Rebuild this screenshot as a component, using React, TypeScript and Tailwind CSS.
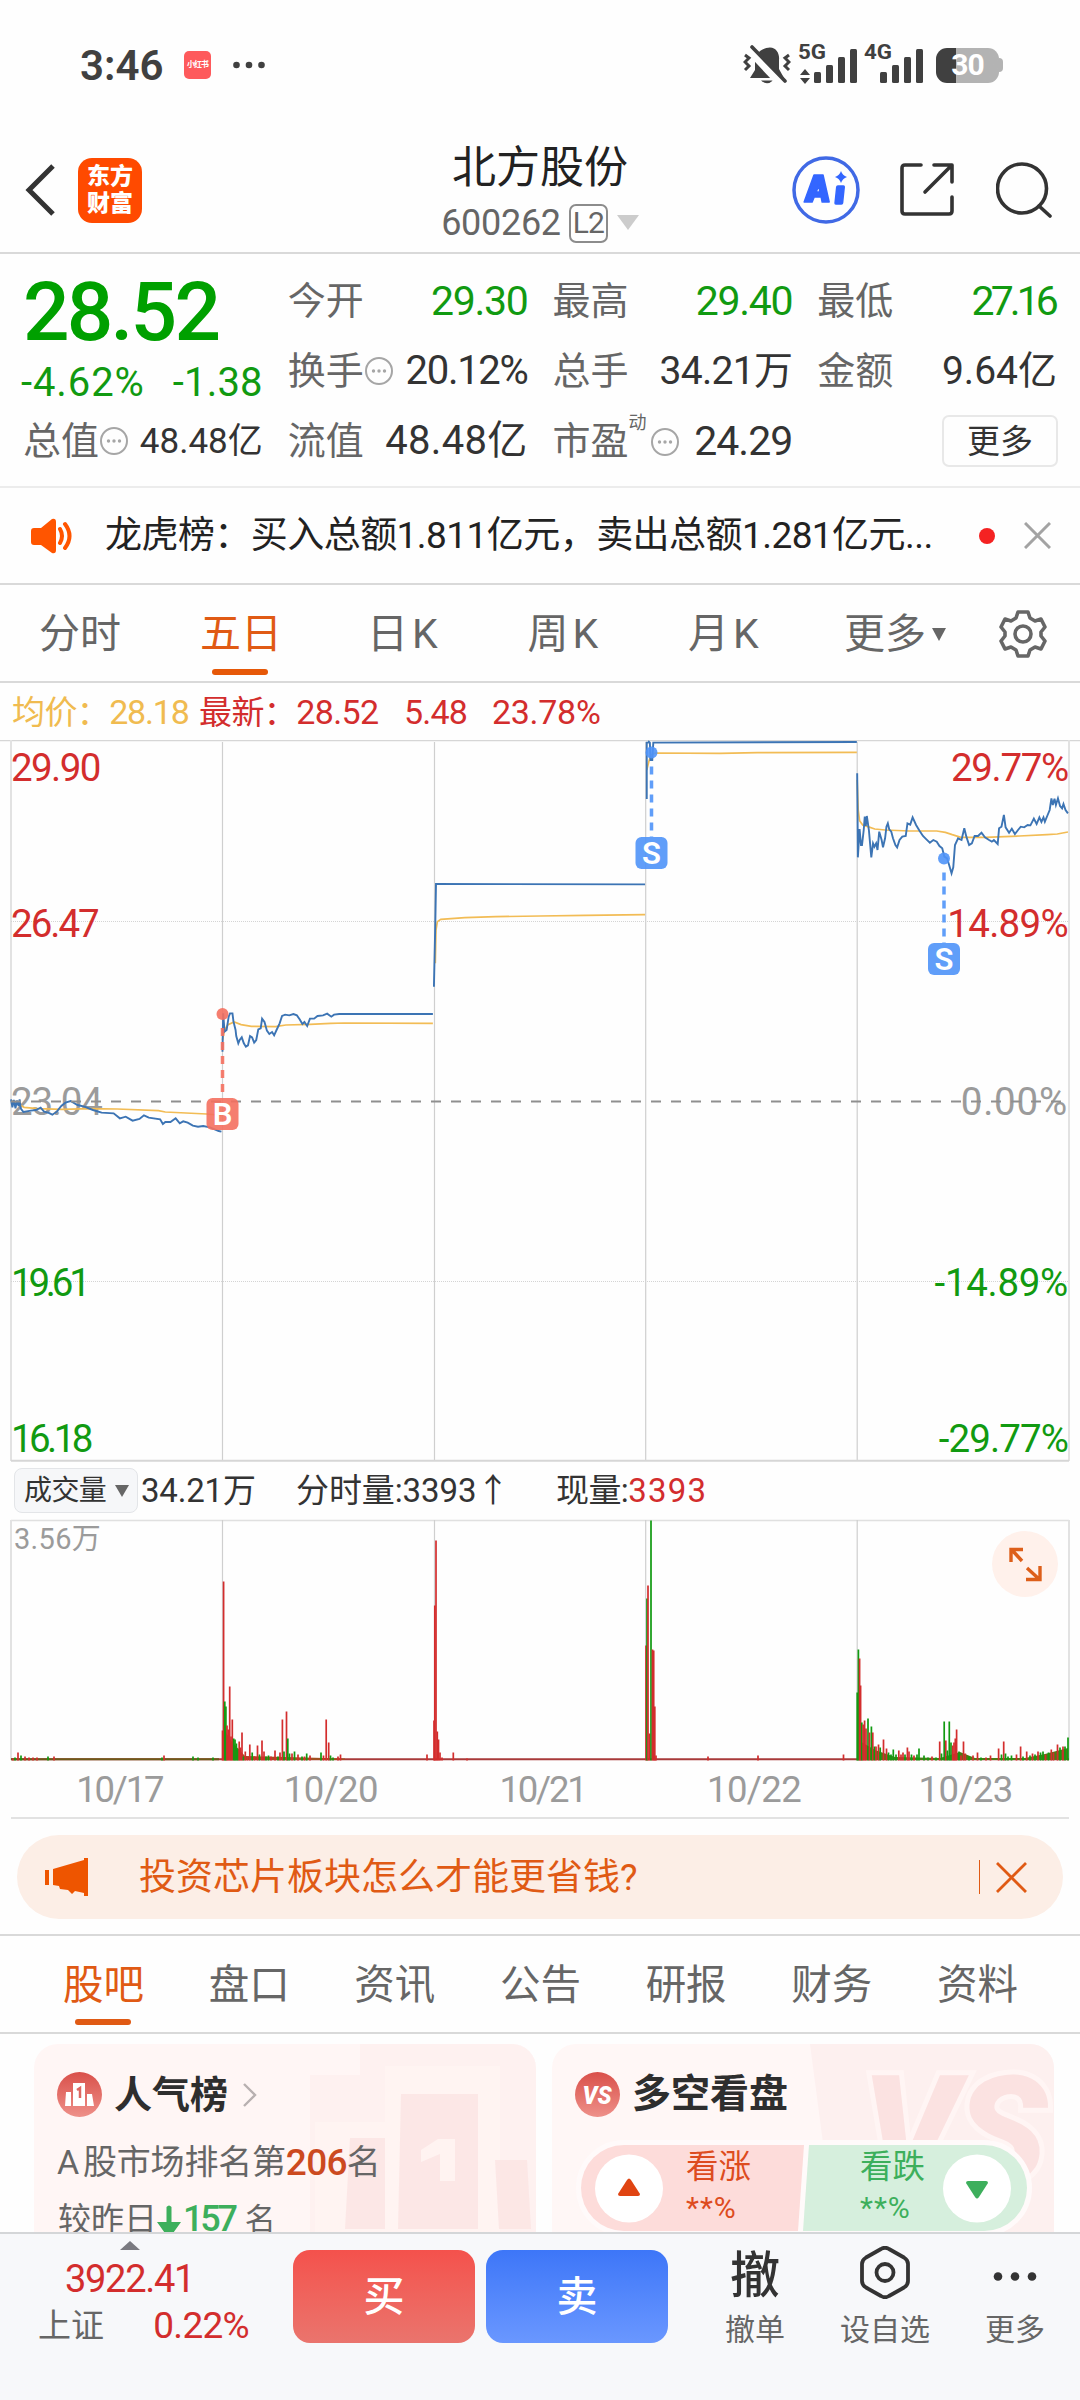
import React from 'react';

type Bar = [number, number, 'r' | 'g'];

const UP = '#d32d2d';
const DOWN = '#119a11';

// price lines, one per trading day
const priceLines = [
  '32,1108 36,1132 40,1110 45,1135 49,1112 54,1128 57,1108 60,1135 68,1146 90,1142 104,1140 118,1133 128,1145 140,1148 152,1154 165,1145 178,1128 190,1118 205,1113 225,1125 245,1130 270,1140 295,1148 330,1150 348,1165 365,1160 385,1172 405,1167 418,1156 432,1163 465,1168 473,1182 480,1176 495,1176 510,1165 522,1180 532,1174 545,1178 560,1187 575,1190 590,1188 610,1192 635,1203 643,1205',
  '646,965 648,850 652,905 658,900 664,860 668,850 675,850 678,875 684,900 686,918 692,940 696,930 702,922 708,940 714,950 720,946 726,918 732,922 738,938 744,930 750,898 757,895 761,866 768,876 775,902 782,912 790,906 796,916 803,900 812,880 819,858 828,854 840,856 852,852 862,856 870,868 878,882 884,876 892,888 900,866 912,866 922,858 938,856 950,851 962,860 970,854 985,852 1257,852',
  '1260,770 1264,580 1266,462 1873,463',
  '1878,207 1878,38 1882,38 1884,35 1887,38 1889,90 1894,90 1897,38 2488,36',
  '2489,130 2490,240 2491,382 2496,297 2500,345 2503,345 2508,300 2511,260 2514,288 2517,258 2523,300 2530,382 2535,340 2539,350 2544,340 2548,360 2553,305 2560,330 2564,352 2570,325 2574,290 2578,280 2582,298 2588,305 2593,325 2600,345 2605,352 2612,330 2620,320 2630,318 2635,280 2643,284 2650,262 2660,285 2670,302 2680,318 2690,328 2700,338 2710,330 2720,335 2728,348 2736,355 2742,380 2750,385 2756,405 2763,430 2768,412 2773,345 2782,325 2792,330 2800,295 2806,320 2814,345 2822,340 2830,318 2840,318 2850,308 2860,322 2872,330 2880,335 2886,330 2897,342 2901,295 2908,290 2915,255 2920,292 2930,308 2938,296 2947,312 2956,300 2964,290 2974,292 2984,285 2992,286 3002,266 3010,282 3018,262 3024,276 3030,262 3034,275 3042,255 3048,240 3053,205 3057,225 3062,206 3066,225 3072,205 3078,228 3084,235 3088,222 3094,240 3101,250',
];

const avgLines = [
  '32,1112 50,1120 70,1132 110,1136 180,1138 260,1136 340,1137 460,1142 480,1146 600,1152 643,1156',
  '646,930 652,900 662,884 680,876 700,884 730,889 800,890 830,885 900,883 960,880 1000,879 1257,880',
  '1264,700 1266,600 1270,575 1280,568 1350,563 1440,560 1568,558 1700,556 1873,554',
  '1878,120 1884,95 1890,75 1902,69 2090,70 2200,68 2488,67',
  '2489,150 2492,240 2496,272 2505,285 2520,290 2540,297 2570,300 2640,303 2720,303 2745,307 2765,314 2790,322 2860,322 2960,318 3040,314 3070,312 3101,306',
];

const spikes: Bar[] = [
  // 10/17
  [13, 2, 'r'], [15, 3, 'g'], [18, 8, 'r'], [21, 5, 'g'], [25, 4, 'r'], [29, 3, 'r'], [33, 3, 'r'], [37, 3, 'r'], [48, 4, 'g'], [54, 4, 'r'],
  [162, 3, 'g'], [164, 5, 'r'], [193, 4, 'g'], [198, 3, 'g'], [213, 3, 'g'],
  // 10/20
  [222.5, 30, 'r'], [223.6, 179, 'r'], [224.8, 59, 'g'], [225.9, 54, 'g'], [227, 35, 'r'], [228.3, 31, 'r'], [229.7, 74, 'r'], [231, 24, 'r'],
  [232.3, 41, 'r'], [233.7, 22, 'g'], [235, 21, 'g'], [236.4, 17, 'g'], [237.8, 12, 'g'], [239.2, 19, 'r'], [240.5, 13, 'r'], [242, 28, 'r'],
  [243.5, 4, 'g'], [245.3, 9, 'r'], [247.5, 4, 'r'], [249.8, 16, 'r'], [252.2, 8, 'g'], [254.5, 4, 'r'], [257.5, 15, 'r'], [259.5, 6, 'g'],
  [262, 20, 'r'], [264, 9, 'r'], [266, 4, 'g'], [268.5, 5, 'g'], [271, 4, 'r'], [275, 10, 'r'], [278, 4, 'g'], [280, 8, 'r'], [282.4, 41, 'r'],
  [284, 9, 'g'], [286.5, 49, 'r'], [287.8, 22, 'g'], [289.5, 7, 'g'], [292, 7, 'r'], [294.5, 9, 'g'], [298, 6, 'r'], [302, 4, 'g'],
  [304.5, 4, 'r'], [306.7, 7, 'g'], [310, 5, 'r'], [321, 8, 'g'], [323.5, 5, 'r'], [326.2, 41, 'r'], [328.7, 18, 'r'], [330.5, 5, 'g'],
  [333, 3, 'g'], [338, 4, 'r'], [340.5, 6, 'r'], [427, 6, 'r'],
  // 10/21
  [434, 40, 'r'], [434.8, 155, 'r'], [436, 220, 'r'], [437.3, 29, 'r'], [438.5, 21, 'r'], [440, 8, 'r'], [442, 3, 'r'], [453.3, 8, 'r'], [467, 2, 'r'],
  // 10/22
  [646, 115, 'r'], [647, 162, 'g'], [648, 175, 'r'], [649.5, 27, 'r'], [651, 240, 'g'], [652.5, 111, 'r'], [653.7, 110, 'r'], [654.8, 54, 'r'],
  [656, 5, 'r'], [708, 4, 'r'], [758, 5, 'r'], [843.5, 6, 'r'],
  // 10/23
  [857.2, 68, 'g'], [858.4, 111, 'g'], [859.6, 102, 'r'], [860.6, 75, 'r'], [861.8, 38, 'g'], [863.1, 36, 'r'], [864.6, 40, 'r'], [866, 32, 'r'],
  [868, 42, 'g'], [869.5, 28, 'r'], [871.4, 34, 'g'], [872.8, 28, 'r'], [874.5, 14, 'g'], [876, 14, 'r'], [878.5, 16, 'r'], [880.2, 13, 'g'],
  [883.5, 21, 'r'], [886.5, 12, 'r'], [888.5, 8, 'g'], [891, 6, 'g'], [893.3, 11, 'g'], [896, 6, 'g'], [898.8, 10, 'r'], [901, 6, 'r'],
  [903, 8, 'r'], [905, 6, 'g'], [907.4, 13, 'r'], [909, 9, 'r'], [911.5, 6, 'g'], [914, 5, 'r'], [917, 6, 'g'], [919, 12, 'g'],
  [924, 5, 'g'], [928, 3, 'g'], [932, 4, 'r'], [936, 3, 'g'], [939.7, 19, 'r'], [941.5, 7, 'g'], [944.2, 39, 'g'], [945.8, 20, 'r'],
  [947.4, 10, 'g'], [949.3, 39, 'g'], [951, 18, 'g'], [952.7, 15, 'r'], [954, 18, 'r'], [955.3, 22, 'r'], [956.6, 31, 'r'], [959, 9, 'g'],
  [961, 5, 'r'], [963.5, 19, 'r'], [965.3, 7, 'r'], [969, 4, 'g'], [973, 5, 'r'], [977.5, 8, 'r'], [981, 3, 'g'], [986, 3, 'r'], [990.5, 5, 'r'],
  [998.6, 12, 'r'], [1001.5, 6, 'g'], [1003.7, 19, 'r'], [1005.5, 7, 'g'], [1008, 4, 'g'], [1011.5, 5, 'g'], [1016.5, 6, 'r'],
  [1020.6, 14, 'r'], [1023, 4, 'g'], [1026.7, 9, 'r'], [1030, 5, 'g'], [1032.5, 7, 'r'], [1035, 6, 'g'], [1038, 9, 'r'], [1040.5, 8, 'g'],
  [1043, 9, 'g'], [1045.5, 6, 'r'], [1048.5, 8, 'g'], [1051.3, 11, 'r'], [1053.5, 8, 'r'], [1057.5, 16, 'r'], [1060, 13, 'g'],
  [1063, 14, 'r'], [1065, 14, 'g'], [1068, 23, 'g'],
];

const chartTabs = ['日K', '周K', '月K'];
const infoTabs = ['股吧', '盘口', '资讯', '公告', '研报', '财务', '资料'];
const dates = ['10/17', '10/20', '10/21', '10/22', '10/23'];

const Dots = () => (
  <svg width="28" height="28" viewBox="0 0 28 28" className="ml-px shrink-0">
    <circle cx="14" cy="14" r="13" fill="none" stroke="#a6a6a6" strokeWidth="2" />
    <circle cx="8.5" cy="14" r="1.7" fill="#a6a6a6" />
    <circle cx="14" cy="14" r="1.7" fill="#a6a6a6" />
    <circle cx="19.5" cy="14" r="1.7" fill="#a6a6a6" />
  </svg>
);

const Signal = ({ label, arrows }: { label: string; arrows?: boolean }) => (
  <svg width="60" height="50" viewBox="0 -8 60 50" className="-mt-[8px]" fill="#404040">
    <text x="0" y="15" fontSize="20" fontWeight="700" textLength="28" lengthAdjust="spacingAndGlyphs">{label}</text>
    {arrows && <path d="M2 31 L7 25 L12 31 Z M2 34 H12 L7 40 Z" />}
    <rect x="16" y="28" width="7" height="11" rx="1.5" />
    <rect x="28" y="21" width="7" height="18" rx="1.5" />
    <rect x="40" y="13" width="7" height="26" rx="1.5" />
    <rect x="52" y="5" width="7" height="34" rx="1.5" />
  </svg>
);

const StatusBar = () => (
  <div className="flex h-[130px] items-center pl-[80px] pr-[77px] text-[#404040]">
    <span className="w-[82px] whitespace-nowrap pt-[2px] text-[42px] font-semibold leading-none">3:46</span>
    <div className="ml-[22px] flex h-[28px] w-[27px] items-center justify-center rounded-[5px] bg-[#fe5a5c]">
      <span className="whitespace-nowrap text-[8px] font-bold leading-none tracking-[-1px] text-white">小红书</span>
    </div>
    <svg width="34" height="10" viewBox="0 0 34 10" className="ml-[21px]" fill="#404040">
      <circle cx="4.5" cy="5" r="3.3" />
      <circle cx="17" cy="5" r="3.3" />
      <circle cx="29.5" cy="5" r="3.3" />
    </svg>
    <svg width="48" height="42" viewBox="0 0 48 42" className="ml-auto">
      <path d="M17 7 C31 -2 37 8 36 16 V25 L41 34 H7 L12 26 V13 Z" fill="#404040" />
      <path d="M18 36.5 H30 Q24 42 18 36.5 Z" fill="#404040" />
      <path d="M6 5 L37 38" stroke="#fefefe" strokeWidth="9" />
      <path d="M9 3 L42 37" stroke="#404040" strokeWidth="3.6" strokeLinecap="round" />
      <path d="M2 11 L6 14 L2 18 L6 22 L2 26" fill="none" stroke="#404040" strokeWidth="3" />
      <path d="M46 11 L42 14 L46 18 L42 22 L46 26" fill="none" stroke="#404040" strokeWidth="3" />
    </svg>
    <div className="ml-[7px] flex gap-[6px]">
      <Signal label="5G" arrows />
      <Signal label="4G" />
    </div>
    <div className="ml-[12px] flex items-center">
      <div className="flex h-[35px] w-[63px] items-center justify-center rounded-[11px] bg-linear-to-r from-[#404040] from-[31%] to-[#b3b3b3] to-[31%]">
        <span className="text-[30px] font-bold leading-none tracking-[-1px] text-white">30</span>
      </div>
      <div className="h-[14px] w-[4px] rounded-r-full bg-[#b3b3b3]" />
    </div>
  </div>
);

const Header = () => (
  <div className="grid h-[124px] grid-cols-3 border-b-2 border-[#d9d9d9]">
    <div className="flex items-center pb-0.5 pl-[24px]">
      <svg width="32" height="54" viewBox="0 0 32 54" fill="none" stroke="#333" strokeWidth="5">
        <path d="M29 3 L5 27 L29 51" />
      </svg>
      <div className="ml-[22px] flex h-[65px] w-[64px] flex-col items-center justify-center rounded-[14px] bg-[#ff4a00] text-[23px] font-black leading-[27px] text-white">
        <span>东方</span>
        <span>财富</span>
      </div>
    </div>
    <div className="flex flex-col items-center pt-[11px]">
      <h1 className="text-[44px] leading-[54px] text-[#222]">北方股份</h1>
      <div className="flex h-[56px] items-center text-[#666]">
        <span className="text-[36px] leading-none tracking-[-0.3px]">600262</span>
        <span className="ml-[8px] flex h-[39px] w-[39px] items-center justify-center rounded-[7px] border-2 border-[#8c8c8c] text-[30px] leading-none tracking-[-1px]">L2</span>
        <svg width="22" height="16" viewBox="0 0 22 16" className="ml-[9px]">
          <path d="M0 0 H22 L11 15 Z" fill="#ccc" />
        </svg>
      </div>
    </div>
    <div className="flex items-center justify-end pb-[2px] pr-[28px]">
      <svg width="68" height="68" viewBox="0 0 68 68">
        <circle cx="34" cy="34" r="32" fill="none" stroke="#4069e5" strokeWidth="3.5" />
        <g transform="skewX(-6)" fill="#3366ff" stroke="#3366ff" strokeWidth="1.5" strokeLinejoin="round">
          <path fillRule="evenodd" d="M24 19 H33 L42 46 H35 L33.500 41 H26.500 L25 46 H17 Z M28 36 H31.500 L30 29 Z" />
          <rect x="48" y="30" width="7.500" height="18" rx="1" />
        </g>
        <path d="M49 15 Q50.500 19.500 55 21 Q50.500 22.500 49 27 Q47.500 22.500 43 21 Q47.500 19.500 49 15 Z" fill="#3366ff" />
      </svg>
      <svg width="54" height="56" viewBox="0 0 54 56" className="ml-[40px]" fill="none" stroke="#333" strokeWidth="3.6" strokeLinecap="round" strokeLinejoin="round">
        <path d="M21 3 H5 Q2 3 2 6 V49 Q2 52 5 52 H49 Q52 52 52 49 V35" />
        <path d="M34 3 H52 V20 M51 4 L25 30" />
      </svg>
      <svg width="56" height="56" viewBox="0 0 56 56" className="ml-[42px]" fill="none" stroke="#333" strokeWidth="3.6" strokeLinecap="round">
        <circle cx="26" cy="26.500" r="24.500" />
        <path d="M43 44 L54 54" />
      </svg>
    </div>
  </div>
);

const Quotes = () => (
  <div className="flex h-[234px] gap-[25px] border-b-2 border-[#ececec] px-[23px] pt-[12px] text-[38px] leading-none text-[#666]">
    <div className="w-[240px]">
      <div className="flex h-[92px] items-center text-[82px] font-medium tracking-[-2.8px] text-[#00a000]">28.52</div>
      <div className="-ml-[2px] flex h-[50px] items-center justify-between text-[40px] text-[#119a11]">
        <span className="tracking-[0.9px]">-4.62%</span>
        <span className="tracking-[0.2px]">-1.38</span>
      </div>
      <div className="flex h-[66px] items-center">
        <span>总值</span>
        <Dots />
        <span className="ml-auto whitespace-nowrap text-[35px] text-[#333]">48.48亿</span>
      </div>
    </div>
    <div className="w-[240px]">
      <div className="flex h-[70px] items-center justify-between">
        <span>今开</span>
        <span className="text-[41px] tracking-[-1.3px] text-[#119a11]">29.30</span>
      </div>
      <div className="flex h-[70px] items-center">
        <span>换手</span>
        <Dots />
        <span className="ml-auto text-[40px] tracking-[-1.3px] text-[#333]">20.12%</span>
      </div>
      <div className="flex h-[70px] items-center justify-between">
        <span>流值</span>
        <span className="text-[40px] tracking-[0.3px] text-[#333]">48.48亿</span>
      </div>
    </div>
    <div className="w-[240px]">
      <div className="flex h-[70px] items-center justify-between">
        <span>最高</span>
        <span className="text-[41px] tracking-[-1.3px] text-[#119a11]">29.40</span>
      </div>
      <div className="flex h-[70px] items-center justify-between">
        <span>总手</span>
        <span className="text-[39px] tracking-[-0.7px] text-[#333]">34.21万</span>
      </div>
      <div className="flex h-[70px] items-center">
        <span>市盈</span>
        <span className="mb-[36px] text-[18px]">动</span>
        <span className="-mb-px ml-[3px] flex"><Dots /></span>
        <span className="ml-auto text-[41px] tracking-[-1px] text-[#333]">24.29</span>
      </div>
    </div>
    <div className="w-[240px]">
      <div className="flex h-[70px] items-center justify-between">
        <span>最低</span>
        <span className="mr-[2px] text-[41px] tracking-[-3.9px] text-[#119a11]">27.16</span>
      </div>
      <div className="flex h-[70px] items-center justify-between">
        <span>金额</span>
        <span className="text-[39px] text-[#333]">9.64亿</span>
      </div>
      <div className="flex h-[70px] items-center justify-end">
        <span className="-mr-px flex h-[52px] w-[116px] items-center justify-center rounded-[7px] border-2 border-[#e8e8e8] text-[33px] text-[#333]">更多</span>
      </div>
    </div>
  </div>
);

const Notice = () => (
  <div className="flex h-[97px] items-center border-b-2 border-[#d9d9d9] pl-[31px] pr-[29px]">
    <svg width="43" height="36" viewBox="0 0 43 36">
      <path d="M3 10 H10 L21 1 Q25 0 25 4 V32 Q25 36 21 35 L10 27 H3 Q0 27 0 24 V13 Q0 10 3 10 Z" fill="#ff5500" />
      <path d="M29 11 Q33 18 29 25 M34 6 Q43 18 34 30" fill="none" stroke="#ff5500" strokeWidth="4" strokeLinecap="round" />
    </svg>
    <span className="ml-[31px] whitespace-nowrap text-[37px] leading-none tracking-[-0.55px] text-[#222]">龙虎榜：买入总额1.811亿元，卖出总额1.281亿元...</span>
    <span className="ml-auto h-[16px] w-[16px] rounded-full bg-[#f42222]" />
    <svg width="27" height="27" viewBox="0 0 27 27" className="ml-[29px]" stroke="#a3a3a3" strokeWidth="3">
      <path d="M1 1 L26 26 M26 1 L1 26" />
    </svg>
  </div>
);

const ChartTabs = () => (
  <div className="flex h-[98px] items-center border-b-2 border-[#d9d9d9] pl-[39px] pr-[33px] pt-[2px] text-[41px] leading-none text-[#666]">
    <span>分时</span>
    <span className="relative ml-[79px] text-[#e05a14]">
      五日
      <span className="absolute -bottom-[20px] left-[12px] h-[6px] w-[56px] rounded-full bg-[#e65808]" />
    </span>
    <div className="ml-[85px] flex w-[401px] justify-between">
      {chartTabs.map((t) => (
        <span key={t} className="flex w-[80px] gap-[4px]"><span>{t[0]}</span><span>{t[1]}</span></span>
      ))}
    </div>
    <span className="ml-[76px]">更多</span>
    <svg width="14" height="13" viewBox="0 0 14 13" className="ml-[6px]">
      <path d="M0 0 H14 L7 13 Z" fill="#666" />
    </svg>
    <svg width="48" height="50" viewBox="0 0 48 50" className="ml-auto" fill="none" stroke="#666" strokeWidth="3.6" strokeLinejoin="round">
      <path d="M19 3 H29 L31 9 L36 12 L42 10 L46 18 L42 23 V27 L46 32 L42 40 L36 38 L31 41 L29 47 H19 L17 41 L12 38 L6 40 L2 32 L6 27 V23 L2 18 L6 10 L12 12 L17 9 Z" />
      <circle cx="24" cy="25" r="8" />
    </svg>
  </div>
);

const Marker = ({ x, top, bottom, label, color }: { x: number; top: number; bottom: number; label: string; color: string }) => (
  <g>
    <circle cx={x} cy={top} r="6" fill={color} />
    <path d={`M${x} ${top + 14} V${bottom - 16}`} stroke={color} strokeWidth="3.5" strokeDasharray="8 6" />
    <rect x={x - 16} y={bottom - 16} width="32" height="32" rx="6" fill={color} />
    <text x={x} y={bottom + 11} textAnchor="middle" fontSize="31" fontWeight="600" fill="#fff">{label}</text>
  </g>
);

const PriceChart = () => (
  <div className="relative h-[722px]">
    {/* grid */}
    <svg width="1080" height="722" viewBox="0 740 1080 722" className="absolute inset-0">
      <path d="M0 740.500 H1080" stroke="#d6d6d6" strokeWidth="1.500" />
      <path d="M11 740 V1461 M1069 740 V1461" stroke="#e2e2e2" strokeWidth="2" />
      <path d="M222.500 742 V1461 M434.500 742 V1461 M645.700 742 V1461 M857.200 742 V1461" stroke="#cfcfcf" strokeWidth="1.200" />
      <path d="M11 921.500 H1069 M11 1281.500 H1069" stroke="#d4d4d4" strokeWidth="1" strokeDasharray="1 1" />
      <path d="M11 1460.800 H1069" stroke="#d6d6d6" strokeWidth="2" />
    </svg>
    <div className="absolute inset-y-0 left-[11px] right-[12px] pt-px text-[38.500px] leading-none tracking-[-1.6px]">
      <div className="flex h-[54px] items-center justify-between text-[#d32d2d]">
        <span>29.90</span>
        <span className="tracking-[-1.3px]">29.77%</span>
      </div>
      <div className="mt-[102px] flex h-[54px] items-center justify-between text-[#d32d2d]">
        <span className="tracking-[-2px]">26.47</span>
        <span className="tracking-[-0.7px]">14.89%</span>
      </div>
      <div className="mt-[124px] flex h-[54px] items-center justify-between text-[#9b9b9b]">
        <span className="tracking-[-1.2px]">23.04</span>
        <span className="tracking-[0.8px]">0.00%</span>
      </div>
      <div className="mt-[127px] flex h-[54px] items-center justify-between text-[#119a11]">
        <span className="tracking-[-4.2px]">19.61</span>
        <span className="tracking-[-0.3px]">-14.89%</span>
      </div>
      <div className="mt-[102px] flex h-[54px] items-center justify-between text-[#119a11]">
        <span className="tracking-[-3.6px]">16.18</span>
        <span className="tracking-[-0.9px]">-29.77%</span>
      </div>
    </div>
    <svg width="1080" height="722" viewBox="0 30 3136 2166" preserveAspectRatio="none" className="absolute inset-0" fill="none">
      {avgLines.map((p) => (
        <polyline key={p} points={p} stroke="#f2bc55" strokeWidth="1.700" vectorEffect="non-scaling-stroke" />
      ))}
      {priceLines.map((p) => (
        <polyline key={p} points={p} stroke="#3c74b4" strokeWidth="1.900" vectorEffect="non-scaling-stroke" />
      ))}
    </svg>
    <svg width="1080" height="722" viewBox="0 740 1080 722" className="absolute inset-0">
      <path d="M11 1101.500 H1069" stroke="#8f8f8f" strokeWidth="2" strokeDasharray="10 10" />
      <Marker x={222.5} top={1014} bottom={1114} label="B" color="#f4705fe6" />
      <Marker x={651.5} top={752.5} bottom={853} label="S" color="#4f94f8e6" />
      <Marker x={944} top={858.5} bottom={959} label="S" color="#4f94f8e6" />
    </svg>
  </div>
);

const VolumeChart = () => (
  <div>
    <div className="flex h-[57px] items-center pl-[14px] text-[33px] leading-none tracking-[-0.6px] text-[#333]">
      <span className="flex h-[45px] w-[124px] items-center justify-between rounded-[8px] border border-[#e3e5e8] bg-[#f6f7f9] pl-[9px] pr-[8px] text-[28px]">
        成交量
        <svg width="14" height="12" viewBox="0 0 14 12"><path d="M0 0 H14 L7 12 Z" fill="#666" /></svg>
      </span>
      <span className="ml-[3px] w-[155px] tracking-[-0.2px]">34.21万</span>
      <span className="w-[260px] tracking-[-0.1px]">分时量:3393↑</span>
      <span>现量:<span className="tracking-[1.2px] text-[#d32d2d]">3393</span></span>
    </div>
    <div className="relative h-[242px]">
      <svg width="1080" height="242" viewBox="0 1519 1080 242" className="absolute inset-0">
        <path d="M11 1520.500 H1069" stroke="#e0e0e0" strokeWidth="1.500" />
        <path d="M11 1520 V1760 M1069 1520 V1760" stroke="#e2e2e2" strokeWidth="2" />
        <path d="M222.500 1520 V1760 M434.500 1520 V1760 M645.700 1520 V1760 M857.200 1520 V1760" stroke="#cfcfcf" strokeWidth="1.200" />
        <path d="M11 1759.300 H1069" stroke="#a83a3a" strokeWidth="2" />
        <path d="M11 1759.300 H219" stroke="#6c5a1a" strokeWidth="2" />
        <path d="M858 1757 V1740 L875 1750 L895 1757 L940 1758 L960 1752 L975 1758 H1025 L1045 1754 L1068 1748 V1760 H858 Z" fill="#4c7a14" />
        <path d="M223 1760 V1728 L232 1742 L245 1756 L345 1758.500 V1760 Z" fill="#a05020" />
        {spikes.map(([x, h, c], i) => (
          <rect key={i} x={x - 0.85} y={1760.5 - h} width="1.700" height={h} fill={c === 'r' ? UP : DOWN} />
        ))}
      </svg>
      <span className="absolute left-[14px] top-[6px] text-[29px] leading-none tracking-[0.3px] text-[#9b9b9b]">3.56万</span>
      <svg width="66" height="68" viewBox="0 0 66 68" className="absolute left-[992px] top-[11px]">
        <circle cx="33" cy="34" r="33" fill="#fff1eb" />
        <path d="M31 19.500 H19 V32 M20 20 L30 31 M35 38 L47 49 M48 36 V49.500 H34" fill="none" stroke="#dd5f1a" strokeWidth="3.400" />
      </svg>
    </div>
    <div className="mx-[11px] flex h-[58px] items-center border-b-2 border-[#e2e2e2] pt-[2px] text-[36.500px] leading-none text-[#9b9b9b]">
      {dates.map((d) => (
        <span key={d} className={`flex-1 pl-[5px] text-center ${d.endsWith('1') || d.endsWith('7') ? 'tracking-[-2.2px]' : 'tracking-[-0.6px]'}`}>{d}</span>
      ))}
    </div>
  </div>
);

const Banner = () => (
  <div className="h-[117px] border-b-2 border-[#d9d9d9] px-[17px] pt-[16px]">
    <div className="flex h-[84px] items-center rounded-full bg-[#fceee6] pl-[28px] pr-[36px] text-[#e05a14]">
      <svg width="43" height="38" viewBox="0 0 43 38" fill="#ee5500">
        <path d="M0 12 H4 V27 H0 Z M8 11 L39 2 V0 H43 V38 H39 V35 L30 33 L27 36 L23 32 L15 31 L14 28 L8 27 Z" />
      </svg>
      <span className="ml-[51px] pt-px text-[37px] leading-none">投资芯片板块怎么才能更省钱?</span>
      <span className="ml-auto h-[34px] w-px bg-[#e05a14]" />
      <svg width="31" height="31" viewBox="0 0 31 31" className="ml-[16px]" stroke="#e05a14" strokeWidth="2.800">
        <path d="M1 1 L30 30 M30 1 L1 30" />
      </svg>
    </div>
  </div>
);

const InfoTabs = () => (
  <div className="flex h-[98px] items-center justify-between border-b-2 border-[#d9d9d9] pl-[63px] pr-[62px] pt-[2px] text-[40.500px] leading-none text-[#666]">
    {infoTabs.map((t, i) => (
      <span key={t} className={i === 0 ? 'relative text-[#e05a14]' : ''}>
        {t}
        {i === 0 && <span className="absolute -bottom-[20px] left-[12px] h-[6px] w-[56px] rounded-full bg-[#e05a14]" />}
      </span>
    ))}
  </div>
);

const Cards = () => (
  <div className="flex h-[198px] gap-[16px] overflow-hidden pl-[34px] pr-[26px] pt-[10px]">
    <div className="relative h-[260px] w-[502px] overflow-hidden rounded-[24px] bg-[#fff6f5] text-[#666]">
      <svg width="502" height="190" viewBox="34 2044 502 190" className="absolute inset-0">
        <path d="M360 2044 H536 V2234 H310 V2075 H360 Z" fill="#fdf0ee" opacity=".7" />
        <path d="M315 2122 H385 V2066 H500 V2234 H315 Z" fill="#fff5f3" opacity=".8" />
        <path d="M350 2138 H385 V2229 H345 Z M401 2094 H478 V2229 H398 Z M495 2160 H527 L531 2229 H499 Z" fill="#fbe3e1" opacity=".75" />
        <path d="M421 2150 L438 2139 H455 V2181 H440 V2154 L421 2162 Z" fill="#fff3f1" />
      </svg>
      <div className="relative flex h-[101px] items-center pl-[23px]">
        <svg width="45" height="45" viewBox="0 0 45 45">
          <defs>
            <linearGradient id="badge" x1="0" y1="0" x2="0" y2="1">
              <stop offset="0" stopColor="#d9504a" />
              <stop offset="1" stopColor="#ee9089" />
            </linearGradient>
          </defs>
          <circle cx="22.500" cy="22.500" r="22.500" fill="url(#badge)" />
          <path d="M9 20 H14 V34 H8 Z M16 11 H28 V34 H16 Z M30 22 H35 L37 34 H30 Z" fill="#fff" />
          <path d="M20 18 L23 16 V26" fill="none" stroke="#dd6660" strokeWidth="2.500" />
        </svg>
        <span className="ml-[12px] text-[38px] font-bold leading-none text-[#2e2e2e]">人气榜</span>
        <svg width="14" height="24" viewBox="0 0 14 24" className="ml-[15px]" fill="none" stroke="#b8b0b0" strokeWidth="2.400">
          <path d="M1 1 L12 12 L1 23" />
        </svg>
      </div>
      <div className="relative flex h-[34px] items-center pl-[23px] text-[34px] leading-none tracking-[-0.2px]">
        <span>A</span><span className="ml-[4px]">股市场排名第</span>
        <span className="text-[37px] font-medium tracking-[-0.7px] text-[#cc4a1f]">206</span>
        <span>名</span>
      </div>
      <div className="relative mt-[23px] flex h-[34px] items-center pl-[24px] text-[33px] leading-none">
        <span>较昨日</span>
        <svg width="24" height="34" viewBox="0 0 24 34" className="mt-[6px]" fill="#3daf5c">
          <path d="M9.500 2 Q12 -1 14.500 2 V17 H24 L14 31 Q12 33 10 31 L0 17 H9.500 Z" />
        </svg>
        <span className="ml-[2px] text-[36px] font-medium tracking-[-3.2px] text-[#3daf5c]">157</span>
        <span className="ml-[10px] text-[31px]">名</span>
      </div>
    </div>

    <div className="relative h-[260px] w-[502px] overflow-hidden rounded-[24px] bg-[#fff7f6]">
      <svg width="502" height="190" viewBox="552 2044 502 190" className="absolute inset-0">
        <path d="M810 2044 H1054 V2234 H835 Z" fill="#fdf0ef" />
        <text x="862" y="2182" fontSize="150" fontWeight="900" fontStyle="italic" fill="#fbe2e1" stroke="#fff5f4" strokeWidth="10" paintOrder="stroke" textLength="185">VS</text>
      </svg>
      <div className="relative flex h-[101px] items-center pl-[23px]">
        <svg width="45" height="45" viewBox="0 0 45 45">
          <circle cx="22.500" cy="22.500" r="22.500" fill="url(#badge)" />
          <text x="22" y="32" textAnchor="middle" fontSize="26" fontWeight="900" fontStyle="italic" fill="#fff" textLength="29" lengthAdjust="spacingAndGlyphs">VS</text>
        </svg>
        <span className="ml-[12px] text-[39px] font-bold leading-none text-[#2e2e2e]">多空看盘</span>
      </div>
      <div className="relative ml-[24px] -mt-[5px] flex h-[96px] w-[456px] rounded-full border-[5px] border-[#fffafa] bg-[#fffafa] leading-none">
        <svg width="446" height="86" viewBox="0 0 446 86" className="absolute inset-0">
          <path d="M43 0 H223 L217 86 H43 A43 43 0 0 1 43 0 Z" fill="#fddcda" />
          <path d="M228 0 H403 A43 43 0 0 1 403 86 H222 Z" fill="#d6efdd" />
          <circle cx="48" cy="43.500" r="34" fill="#fff" />
          <circle cx="396" cy="43.500" r="34" fill="#fff" />
          <path d="M46 35 Q48 32 50 35 L59 49 Q59 51 57 51 H39 Q37 51 37 49 Z" fill="#e04412" />
          <path d="M394 52 Q396 55 398 52 L407 38 Q407 36 405 36 H387 Q385 36 385 38 Z" fill="#3daf5c" />
        </svg>
        <div className="relative ml-[105px] w-[66px] pt-[6px] text-[32.500px] text-[#dd4c20]">
          <div className="h-[38px]">看涨</div>
          <div className="text-[30px] leading-[38px] tracking-[1px]">**%</div>
        </div>
        <div className="relative ml-[108px] w-[66px] pt-[6px] text-[32.500px] text-[#3daf5c]">
          <div className="h-[38px]">看跌</div>
          <div className="text-[30px] leading-[38px] tracking-[1px]">**%</div>
        </div>
      </div>
    </div>
  </div>
);

const BottomBar = () => (
  <div className="relative flex h-[168px] border-t-2 border-[#d4d6d8] bg-[#f7f8fa] leading-none text-[#666]">
    <svg width="20" height="10" viewBox="0 0 20 10" className="absolute left-[120px] top-[7px]">
      <path d="M0 9 L10 0 L20 9 Z" fill="#7a7a80" />
    </svg>
    <div className="w-[293px] pt-[26px]">
      <div className="pl-[65px] text-[38px] tracking-[-1.3px] text-[#d32d2d]">3922.41</div>
      <div className="mt-[8px] flex h-[38px] items-center justify-between pl-[38px] pr-[44px] text-[33px]">
        <span>上证</span>
        <span className="text-[37px] tracking-[-0.7px] text-[#d32d2d]">0.22%</span>
      </div>
    </div>
    <div className="mt-[16px] flex h-[93px] w-[182px] items-center justify-center rounded-[17px] bg-linear-to-b from-[#f4514c] to-[#ea746d] pt-px text-[41px] font-medium text-white">买</div>
    <div className="ml-[11px] mt-[16px] flex h-[93px] w-[182px] items-center justify-center rounded-[17px] bg-linear-to-b from-[#3d76f8] to-[#6a97ff] pt-px text-[41px] font-medium text-white">卖</div>
    <div className="ml-[42px] mt-[12px] flex w-[90px] flex-col items-center text-[30px]">
      <span className="h-[53px] pt-[5px] text-[50px] font-medium text-[#333]">撤</span>
      <span className="mt-[16px]">撤单</span>
    </div>
    <div className="ml-[30px] mt-[12px] flex w-[110px] flex-col items-center text-[30px]">
      <svg width="50" height="53" viewBox="0 0 50 53" fill="none" stroke="#333" strokeWidth="3.800" strokeLinejoin="round">
        <path d="M21 3 Q25 0.500 29 3 L44 11.500 Q48 14 48 18 V35 Q48 39 44 41.500 L29 50 Q25 52.500 21 50 L6 41.500 Q2 39 2 35 V18 Q2 14 6 11.500 Z" />
        <circle cx="25" cy="26.500" r="8.500" />
      </svg>
      <span className="mt-[16px]">设自选</span>
    </div>
    <div className="ml-[40px] mt-[12px] flex w-[70px] flex-col items-center text-[30px]">
      <svg width="46" height="53" viewBox="0 0 46 53" fill="#333">
        <circle cx="6" cy="30.500" r="4.300" />
        <circle cx="23" cy="30.500" r="4.300" />
        <circle cx="40" cy="30.500" r="4.300" />
      </svg>
      <span className="mt-[16px]">更多</span>
    </div>
  </div>
);

const App = () => {
  return (
    <div className="flex h-[2400px] w-[1080px] flex-col overflow-hidden bg-[#fefefe] font-['Roboto','Noto_Sans_CJK_SC',sans-serif]">
      <StatusBar />
      <Header />
      <Quotes />
      <Notice />
      <ChartTabs />
      <div className="flex h-[57px] items-center whitespace-pre pl-[12px] text-[33px] leading-none tracking-[-0.6px] text-[#d32d2d]">
        <span className="w-[187px] text-[#f0bb50]">均价：<span className="text-[34px] tracking-[-1.2px]">28.18</span></span>
        <span className="w-[205px]">最新：<span className="text-[34px]">28.52</span></span>
        <span className="w-[88px] text-[34px] tracking-[-0.8px]">5.48</span>
        <span className="text-[34px] tracking-[-0.3px]">23.78%</span>
      </div>
      <PriceChart />
      <VolumeChart />
      <Banner />
      <InfoTabs />
      <Cards />
      <BottomBar />
    </div>
  );
};

export default App;
